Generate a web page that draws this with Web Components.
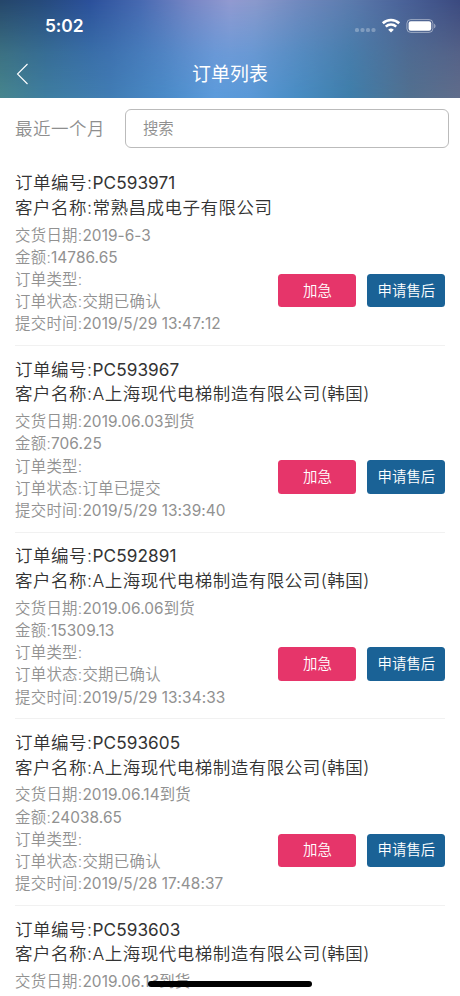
<!DOCTYPE html>
<html lang="zh-CN">
<head>
<meta charset="utf-8">
<title>订单列表</title>
<style>
html,body{margin:0;height:996px;overflow:hidden;background:#fff}
body{font-family:Inter,"Noto Sans CJK SC",sans-serif}
</style>
</head>
<body>
<order-page></order-page>
<script>
class StatusBar extends HTMLElement{
  constructor(){super();this.attachShadow({mode:'open'}).innerHTML=`
<style>
:host{display:flex;justify-content:space-between;align-items:center;height:50px;box-sizing:border-box;padding:2px 24px 0 45px;color:#fff}
.time{font-size:17.400px;line-height:22px;font-weight:600;letter-spacing:-.1px}
svg{display:block}
</style>
<span class="time">5:02</span>
<svg width="82" height="16" viewBox="0 0 82 16">
<g fill="#fff" fill-opacity=".28"><rect x="1" y="10" width="4" height="4" rx="1.600"/><rect x="6.500" y="10" width="4" height="4" rx="1.600"/><rect x="12" y="10" width="4" height="4" rx="1.600"/><rect x="17.500" y="10" width="4" height="4" rx="1.600"/></g>
<g fill="none" stroke="#fff" stroke-width="2.600"><path d="M28.800 5.200a12 12 0 0 1 16.400 0"/><path d="M31.800 8.600a7.500 7.500 0 0 1 10.400 0"/></g>
<path d="M37 14.600l-2.800-2.900a4.100 4.100 0 0 1 5.600 0z" fill="#fff"/>
<rect x="52.900" y="1.600" width="26" height="12.800" rx="3.800" fill="none" stroke="#fff" stroke-opacity=".45"/>
<rect x="54.600" y="3.300" width="22.600" height="9.400" rx="2.200" fill="#fff"/>
<path d="M80.200 5.700c1.700.6 1.700 4 0 4.600z" fill="#fff" fill-opacity=".5"/>
</svg>`}
}
customElements.define('status-bar',StatusBar);

class NavBar extends HTMLElement{
  constructor(){super();this.attachShadow({mode:'open'}).innerHTML=`
<style>
:host{display:grid;grid-template-columns:60px 1fr 60px;align-items:center;height:48px;color:#fff}
svg{display:block;margin-left:16px}
.title{text-align:center;font-size:18.900px;line-height:26px;font-weight:400;letter-spacing:.1px;padding-top:2px}
</style>
<svg width="13" height="22" viewBox="0 0 13 22"><path d="M11.500 1L1.500 11l10 10" fill="none" stroke="#fff" stroke-width="1.100"/></svg>
<span class="title"><slot></slot></span>`}
}
customElements.define('nav-bar',NavBar);

class AppHeader extends HTMLElement{
  constructor(){super();this.attachShadow({mode:'open'}).innerHTML=`
<style>
:host{display:grid;height:98px;flex:none;background:linear-gradient(90deg,#25466a 0,#264a7b 40px,#2b509b 90px,#4769b1 140px,#7786c5 190px,#929ad1 230px,#8b99cc 255px,#7189be 300px,#5c7bae 350px,#485f96 410px,#3b4a80 460px)}
.glow{grid-area:1/1;background:linear-gradient(90deg,#47868e 0,#3f7ea0 45px,#417db4 110px,#4a8bc8 165px,#5b9bdb 215px,#5898d7 250px,#478cc2 300px,#3e7eaa 350px,#52708f 410px,#616d8b 460px);mask-image:linear-gradient(transparent,rgba(0,0,0,.68) 55%,#000)}
.content{grid-area:1/1;position:relative}
</style>
<div class="glow"></div>
<div class="content"><status-bar></status-bar><nav-bar><slot></slot></nav-bar></div>`}
}
customElements.define('app-header',AppHeader);

class SearchRow extends HTMLElement{
  constructor(){super();this.attachShadow({mode:'open'}).innerHTML=`
<style>
:host{display:flex;align-items:center;flex:none;height:61.400px;padding:0 11px 0 15px;color:#8e8e8e}
.range{width:110.400px;font-size:17.500px;line-height:24px;letter-spacing:.5px;font-weight:350;padding-top:1px}
.box{flex:1;height:39px;box-sizing:border-box;border:1px solid #bbb;border-radius:6px;padding:0 16.500px;font-size:15.400px;font-weight:350;line-height:37px}
</style>
<span class="range">最近一个月</span><div class="box">搜索</div>`}
}
customElements.define('search-row',SearchRow);

class ActionButton extends HTMLElement{
  constructor(){super();this.attachShadow({mode:'open'}).innerHTML=`
<style>
:host{display:flex;align-items:center;justify-content:center;width:78px;height:33.500px;border-radius:3.500px;background:#1a6296;color:#fff;font-size:14.400px;font-weight:350;line-height:20px;white-space:nowrap}
:host([kind=urgent]){background:#e6356a}
</style><slot></slot>`}
}
customElements.define('action-button',ActionButton);

class OrderItem extends HTMLElement{
  connectedCallback(){
    const a=n=>this.getAttribute(n)||'';
    const rest=this.hasAttribute('partial')?'':`
<div class="sub">金额:<b>${a('amount')}</b></div>
<div class="sub">订单类型:</div>
<div class="sub">订单状态:${a('status')}</div>
<div class="sub">提交时间:<b>${a('time')}</b></div>`;
    const actions=this.hasAttribute('partial')?'':`<div class="actions"><action-button kind="urgent">加急</action-button><action-button>申请售后</action-button></div>`;
    this.attachShadow({mode:'open'}).innerHTML=`
<style>
:host{display:flex;justify-content:space-between;align-items:flex-start;flex:none;height:186.640px;box-sizing:border-box;margin:0 14.600px 0 15px;padding:11.800px 0 0;border-bottom:1px solid #f1f1f1;white-space:nowrap;font-weight:350}
:host([partial]){height:auto;border:0}
.info{width:258px}
.main{font-size:17.500px;line-height:24.500px;letter-spacing:.5px;color:#333}
.main b{font-weight:400;font-size:17.200px;letter-spacing:.08px}
.sub{font-size:15.400px;line-height:22.200px;letter-spacing:.3px;color:#919191}
.sub b{font-weight:400;letter-spacing:.07px}
.gap{height:4.400px}
.actions{display:flex;gap:11px;margin-top:102.600px}
</style>
<div class="info">
<div class="main">订单编号:<b>${a('no')}</b></div>
<div class="main">客户名称:${a('customer')}</div>
<div class="gap"></div>
<div class="sub">交货日期:<b>${a('delivery')}</b></div>${rest}
</div>${actions}`}
}
customElements.define('order-item',OrderItem);

class HomeIndicator extends HTMLElement{
  constructor(){super();this.attachShadow({mode:'open'}).innerHTML=`
<style>:host{display:block;position:absolute;left:148px;bottom:9px;width:164px;height:6px;border-radius:3px;background:#000}</style>`}
}
customElements.define('home-indicator',HomeIndicator);

class OrderPage extends HTMLElement{
  constructor(){super();this.attachShadow({mode:'open'}).innerHTML=`
<style>:host{display:flex;flex-direction:column;position:relative;width:460px;height:996px;overflow:hidden;background:#fff}</style>
<app-header>订单列表</app-header>
<search-row></search-row>
<order-item no="PC593971" customer="常熟昌成电子有限公司" delivery="2019-6-3" amount="14786.65" status="交期已确认" time="2019/5/29 13:47:12"></order-item>
<order-item no="PC593967" customer="A上海现代电梯制造有限公司(韩国)" delivery="2019.06.03到货" amount="706.25" status="订单已提交" time="2019/5/29 13:39:40"></order-item>
<order-item no="PC592891" customer="A上海现代电梯制造有限公司(韩国)" delivery="2019.06.06到货" amount="15309.13" status="交期已确认" time="2019/5/29 13:34:33"></order-item>
<order-item no="PC593605" customer="A上海现代电梯制造有限公司(韩国)" delivery="2019.06.14到货" amount="24038.65" status="交期已确认" time="2019/5/28 17:48:37"></order-item>
<order-item partial no="PC593603" customer="A上海现代电梯制造有限公司(韩国)" delivery="2019.06.13到货"></order-item>
<home-indicator></home-indicator>`}
}
customElements.define('order-page',OrderPage);
</script>
</body>
</html>
